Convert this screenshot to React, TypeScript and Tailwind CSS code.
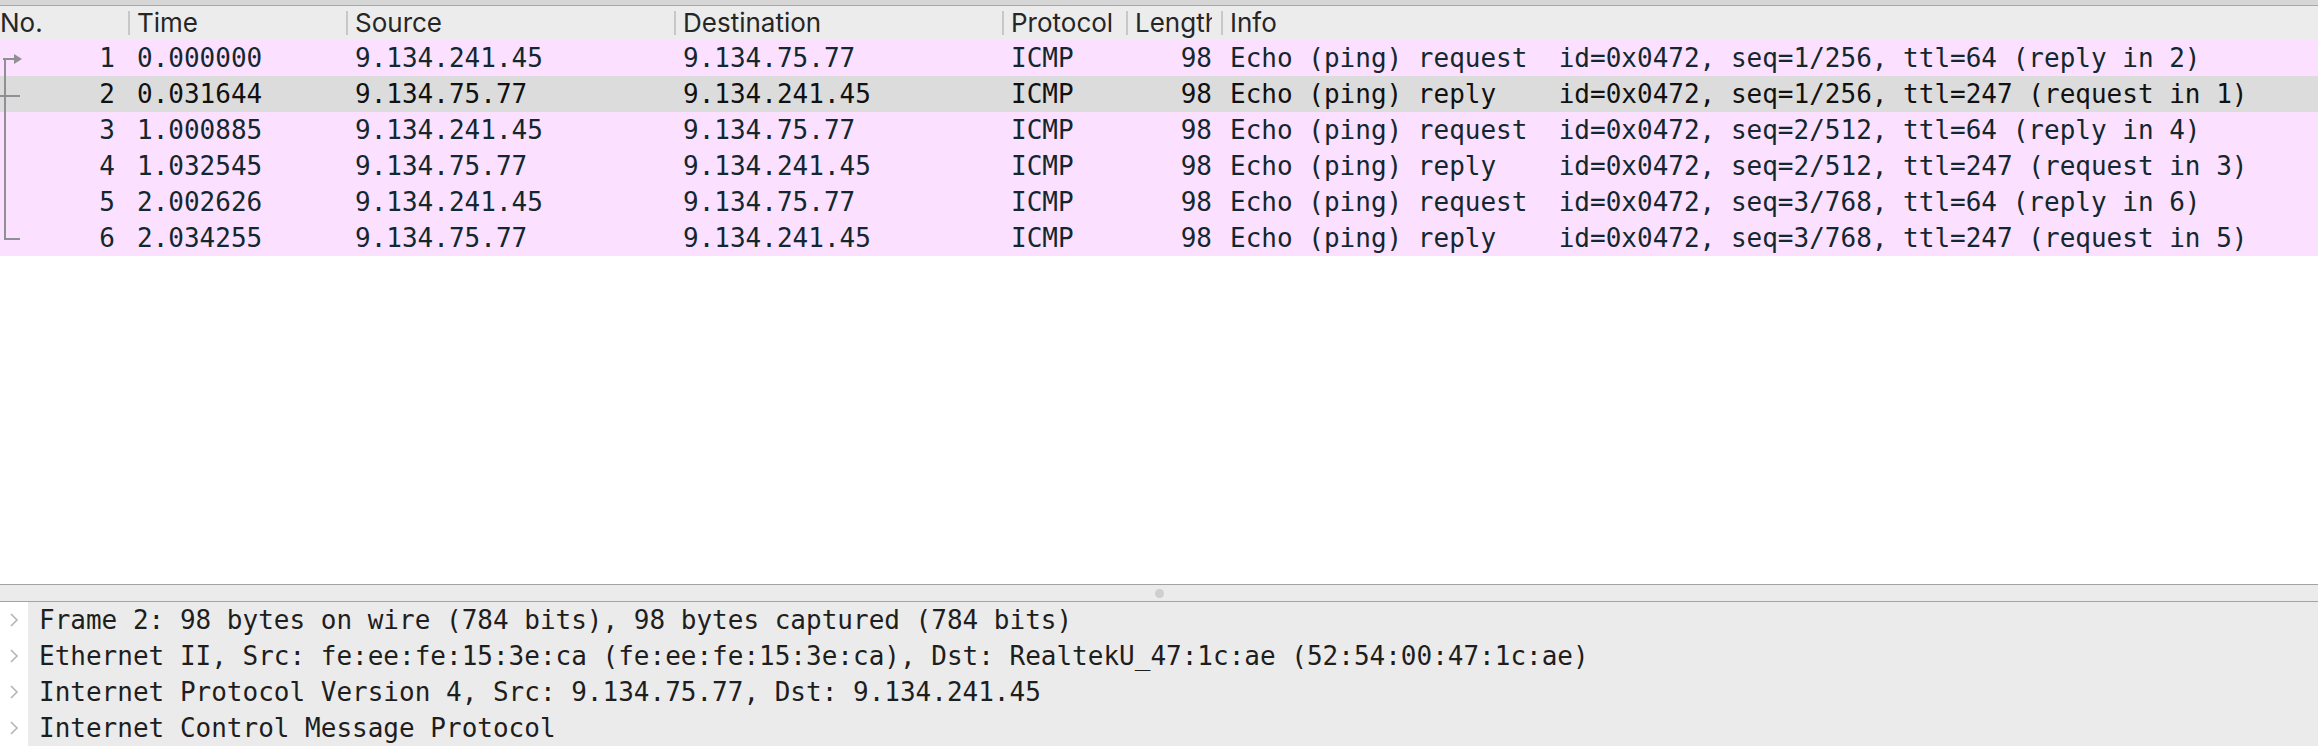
import React from "react";

const mono = { fontFamily: '"DejaVu Sans Mono", "Liberation Mono", monospace' };

type Row = { no: number; time: string; src: string; dst: string; info: string };

const rows: Row[] = [
  { no: 1, time: "0.000000", src: "9.134.241.45", dst: "9.134.75.77", info: "Echo (ping) request  id=0x0472, seq=1/256, ttl=64 (reply in 2)" },
  { no: 2, time: "0.031644", src: "9.134.75.77", dst: "9.134.241.45", info: "Echo (ping) reply    id=0x0472, seq=1/256, ttl=247 (request in 1)" },
  { no: 3, time: "1.000885", src: "9.134.241.45", dst: "9.134.75.77", info: "Echo (ping) request  id=0x0472, seq=2/512, ttl=64 (reply in 4)" },
  { no: 4, time: "1.032545", src: "9.134.75.77", dst: "9.134.241.45", info: "Echo (ping) reply    id=0x0472, seq=2/512, ttl=247 (request in 3)" },
  { no: 5, time: "2.002626", src: "9.134.241.45", dst: "9.134.75.77", info: "Echo (ping) request  id=0x0472, seq=3/768, ttl=64 (reply in 6)" },
  { no: 6, time: "2.034255", src: "9.134.75.77", dst: "9.134.241.45", info: "Echo (ping) reply    id=0x0472, seq=3/768, ttl=247 (request in 5)" },
];

const details = [
  "Frame 2: 98 bytes on wire (784 bits), 98 bytes captured (784 bits)",
  "Ethernet II, Src: fe:ee:fe:15:3e:ca (fe:ee:fe:15:3e:ca), Dst: RealtekU_47:1c:ae (52:54:00:47:1c:ae)",
  "Internet Protocol Version 4, Src: 9.134.75.77, Dst: 9.134.241.45",
  "Internet Control Message Protocol",
];

function HeaderCell({ label, w, clip }: { label: string; w: string; clip?: string }) {
  return (
    <div className={`flex items-center shrink-0 h-full ${w}`}>
      <div className="w-[2px] h-[24px] bg-[#c8c8c8] shrink-0" />
      <span className={`ml-[7px] whitespace-nowrap overflow-hidden block ${clip ?? ""}`}>{label}</span>
    </div>
  );
}

export default function App() {
  return (
    <div className="w-[2318px] h-[752px] bg-white flex flex-col overflow-hidden text-[#262626]">
      {/* top strip */}
      <div className="h-[6px] shrink-0 bg-[#d6d6d6] border-b border-[#a8a8a8]" />
      {/* header */}
      <div
        className="h-[34px] shrink-0 bg-[#ececec] flex items-center text-[26px] leading-[34px] text-[#262626]"
        style={{ fontFamily: 'Inter, "Liberation Sans", sans-serif' }}
      >
        <div className="w-[128px] shrink-0">No.</div>
        <HeaderCell label="Time" w="w-[218px]" />
        <HeaderCell label="Source" w="w-[328px]" />
        <HeaderCell label="Destination" w="w-[328px]" />
        <HeaderCell label="Protocol" w="w-[124px]" />
        <HeaderCell label="Length" w="w-[95px]" clip="w-[77px]" />
        <HeaderCell label="Info" w="flex-1" />
      </div>
      {/* rows */}
      <div className="relative shrink-0 text-[26px] leading-[36px]" style={mono}>
        {rows.map((r) => (
          <div
            key={r.no}
            className={`h-[36px] flex whitespace-pre ${r.no === 2 ? "bg-[#dcdcdc] text-[#111111]" : "bg-[#fce0ff] text-[#12272e]"}`}
          >
            <div className="w-[128px] shrink-0 text-right pr-[13px]">{r.no}</div>
            <div className="w-[218px] shrink-0 pl-[9px]">{r.time}</div>
            <div className="w-[328px] shrink-0 pl-[9px]">{r.src}</div>
            <div className="w-[328px] shrink-0 pl-[9px]">{r.dst}</div>
            <div className="w-[124px] shrink-0 pl-[9px]">ICMP</div>
            <div className="w-[95px] shrink-0 text-right pr-[9px]">98</div>
            <div className="flex-1 pl-[9px]">{r.info}</div>
          </div>
        ))}
        <svg className="absolute left-0 top-0" width="30" height="216" viewBox="0 0 30 216">
          <g stroke="#8f8f94" strokeWidth="2" fill="none">
            <line x1="5" y1="19" x2="5" y2="199" />
            <line x1="3" y1="19" x2="16" y2="19" />
            <line x1="0" y1="56" x2="20" y2="56" />
            <line x1="4" y1="199" x2="20" y2="199" />
          </g>
          <polygon points="14,14 22,19 14,24" fill="#8f8f94" />
        </svg>
      </div>
      {/* empty list area */}
      <div className="flex-1 bg-white" />
      {/* splitter */}
      <div className="h-[18px] shrink-0 bg-[#ebebeb] border-y border-[#a3a3a3] flex items-center justify-center">
        <div className="w-[9px] h-[9px] rounded-full bg-[#cfcfcf]" />
      </div>
      {/* detail pane */}
      <div className="h-[150px] shrink-0 flex flex-col bg-white text-[26px] leading-[36px] text-[#1e1e1e]" style={mono}>
        {details.map((d) => (
          <div key={d} className="h-[36px] flex items-center">
            <div className="w-[28px] h-full shrink-0 flex items-center justify-center">
              <svg width="10" height="16" viewBox="0 0 10 16">
                <polyline points="2,2 8,8 2,14" fill="none" stroke="#b5b5b5" strokeWidth="1.6" />
              </svg>
            </div>
            <div className="flex-1 h-full bg-[#ebebeb] pl-[11px] whitespace-pre">{d}</div>
          </div>
        ))}
      </div>
    </div>
  );
}
